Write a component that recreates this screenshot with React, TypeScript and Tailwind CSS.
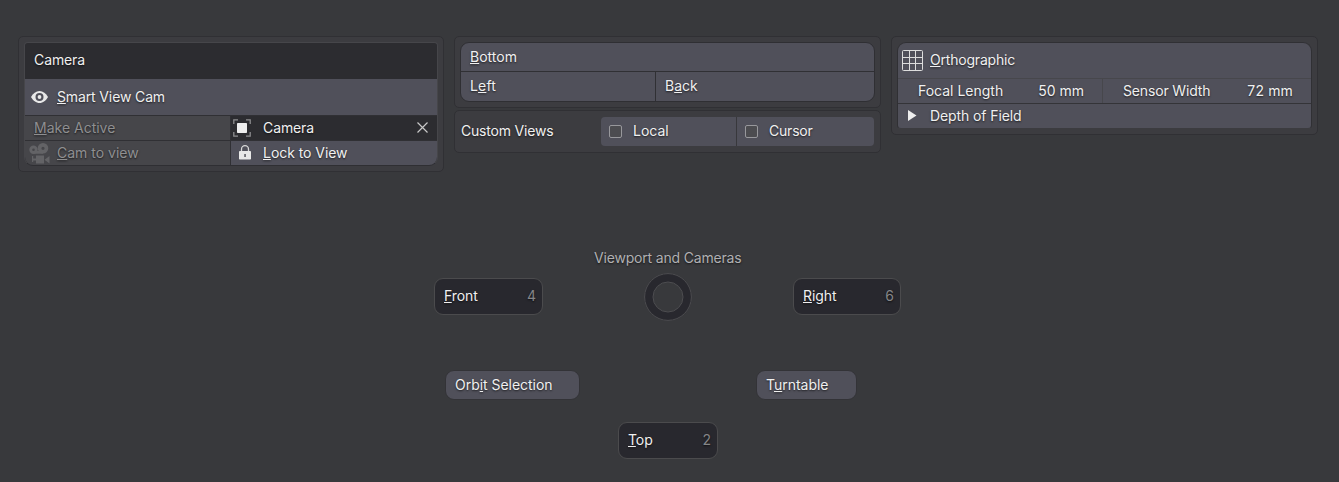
import React from "react";

type LabelProps = { text: string; hot?: number; className?: string };

function Label({ text, hot = -1, className = "" }: LabelProps) {
  return (
    <span className={`whitespace-pre [text-shadow:0_1px_2px_rgba(0,0,0,0.65)] ${className}`}>
      {hot < 0 ? (
        text
      ) : (
        <>
          {text.slice(0, hot)}
          <span className="underline decoration-1 underline-offset-1 [text-decoration-skip-ink:none]">{text[hot]}</span>
          {text.slice(hot + 1)}
        </>
      )}
    </span>
  );
}

function Panel({ className = "", children }: { className?: string; children: React.ReactNode }) {
  return <section className={`rounded-[5px] border border-[#303034] bg-[#3c3c40] ${className}`}>{children}</section>;
}

function EyeIcon() {
  return (
    <svg className="h-[12px] w-[17px]" viewBox="0 0 17 12" fill="none">
      <path d="M0 6C2 2.500 5 0 8.500 0S15 2.500 17 6c-2 3.500-5 6-8.500 6S2 9.500 0 6Z" fill="#e8e8e8" />
      <circle cx="8.500" cy="6" r="4" fill="#50505a" />
      <circle cx="8.500" cy="6" r="1.900" fill="#e8e8e8" />
    </svg>
  );
}

function MovieCameraIcon() {
  return (
    <svg className="h-[21px] w-[21px]" viewBox="0 0 21 21" fill="#636366">
      <path fillRule="evenodd" d="M4.500 2.500a4.200 4.200 0 1 0 0 8.400 4.200 4.200 0 0 0 0-8.400Zm0 2.900a1.300 1.300 0 1 1 0 2.600 1.300 1.300 0 0 1 0-2.600Z" />
      <path fillRule="evenodd" d="M14 0a5.300 5.300 0 1 0 0 10.600A5.300 5.300 0 0 0 14 0Zm0 3.700a1.600 1.600 0 1 1 0 3.200 1.600 1.600 0 0 1 0-3.200Z" />
      <path d="M4 8h10v2.700H4zM7 12.500h8v8H7zM3 13h1.200v2.500H7v2H4.200V19H3zM20.500 13v7.500l-5-3.700Z" />
    </svg>
  );
}

function ObjectIcon() {
  return (
    <svg className="h-[18px] w-[18px]" viewBox="0 0 18 18" fill="none">
      <path d="M.8 5V.8H5M13 .8h4.200V5M17.200 13v4.200H13M5 17.200H.8V13" stroke="#8d8d8f" strokeWidth="1.300" />
      <rect x="4" y="4" width="10" height="10" rx=".8" fill="#eeeeee" />
    </svg>
  );
}

function LockIcon() {
  return (
    <svg className="h-[15px] w-[12px]" viewBox="0 0 12 15" fill="none">
      <path d="M2.500 7V4.200a3.500 3.500 0 0 1 7 0V7" stroke="#d8d8d8" strokeWidth="1.300" />
      <rect x="0" y="6" width="12" height="8.500" rx=".8" fill="#e8e8e8" />
      <rect x="5.300" y="9" width="1.500" height="3" fill="#55555c" />
    </svg>
  );
}

function GridIcon() {
  return (
    <svg className="h-[21px] w-[21px]" viewBox="0 0 21 21" fill="none" stroke="#dddddd">
      <rect x=".5" y=".5" width="20" height="20" rx="1" />
      <path d="M7.500 0v21M13.500 0v21M0 7.500h21M0 13.500h21" />
    </svg>
  );
}

function CloseIcon() {
  return (
    <svg className="h-[11px] w-[11px]" viewBox="0 0 11 11" fill="none" stroke="#c8c8c8" strokeWidth="1.200">
      <path d="m.5.5 10 10M10.500.5l-10 10" />
    </svg>
  );
}

function CameraPanel() {
  return (
    <Panel className="h-[136px] w-[426px] p-[5px]">
      <div className="flex h-[124px] flex-col overflow-hidden rounded-t-[4px] rounded-b-[9px] border border-[#46464a] border-b-[#2f2f33]">
        <div className="flex h-9 items-center bg-[#2c2c30] pb-[2px] pl-[9px]">
          <Label text="Camera" className="tracking-[-0.1px]" />
        </div>
        <div className="flex h-9 items-center bg-[#50505a]">
          <span className="ml-[6px] flex w-[26px]"><EyeIcon /></span>
          <Label text="Smart View Cam" hot={0} className="tracking-[-0.13px]" />
        </div>
        <div className="grid grow grid-cols-[205px_206px] grid-rows-[24px_24px] gap-px bg-[#303034] pt-px">
          <div className="flex items-center bg-[#46464a] pl-[9px] text-[#8f8f91]">
            <Label text="Make Active" hot={0} />
          </div>
          <div className="flex items-center bg-[#2c2c30] pl-[2px]">
            <ObjectIcon />
            <Label text="Camera" className="ml-[12px] tracking-[-0.1px]" />
            <span className="mr-[9px] ml-auto pb-px"><CloseIcon /></span>
          </div>
          <div className="flex items-center bg-[#46464a] pl-[4px] text-[#8f8f91]">
            <MovieCameraIcon />
            <Label text="Cam to view" hot={0} className="ml-[7px]" />
          </div>
          <div className="flex items-center bg-[#50505a] pl-[8px]">
            <span className="pb-px"><LockIcon /></span>
            <Label text="Lock to View" hot={0} className="ml-[12px] tracking-[-0.05px]" />
          </div>
        </div>
      </div>
    </Panel>
  );
}

function Checkbox() {
  return <span className="h-[13px] w-[13px] rounded-[2px] border border-[#98989c] bg-[#4c4c50]" />;
}

function ViewsPanel() {
  return (
    <div className="flex w-[427px] flex-col gap-[2px]">
      <Panel className="h-[72px] p-[5px]">
        <div className="h-[60px] overflow-hidden rounded-[9px] border border-[#2f2f33] bg-[#50505a]">
          <div className="flex h-[29px] items-center border-b border-[#303034] pl-[9px]">
            <Label text="Bottom" hot={0} />
          </div>
          <div className="flex h-[29px]">
            <div className="flex w-[195px] items-center border-r border-[#303034] pb-[2px] pl-[9px]">
              <Label text="Left" hot={1} className="tracking-[0.15px]" />
            </div>
            <div className="flex grow items-center pb-[2px] pl-[9px]">
              <Label text="Back" hot={1} />
            </div>
          </div>
        </div>
      </Panel>
      <Panel className="flex h-[43px] items-center pr-[6px] pl-[6px]">
        <Label text="Custom Views" className="w-[140px] pb-[2px] tracking-[-0.2px]" />
        <div className="flex h-[29px] grow overflow-hidden rounded-[4px] bg-[#50505a]">
          <div className="flex w-[136px] items-center border-r border-[#38383c] pl-[8px]">
            <Checkbox />
            <Label text="Local" className="ml-[11px] pb-[2px]" />
          </div>
          <div className="flex grow items-center pl-[8px]">
            <Checkbox />
            <Label text="Cursor" className="ml-[11px] pb-[2px] tracking-[-0.2px]" />
          </div>
        </div>
      </Panel>
    </div>
  );
}

function LensPanel() {
  return (
    <Panel className="h-[99px] w-[427px] p-[5px]">
      <div className="h-[87px] overflow-hidden rounded-t-[9px] rounded-b-[4px] border border-[#303034] border-b-[#3c3c40] bg-[#50505a]">
        <div className="flex h-[35px] items-center pl-[4px]">
          <GridIcon />
          <Label text="Orthographic" hot={0} className="ml-[7px] pb-[2px] tracking-[-0.2px]" />
        </div>
        <div className="flex h-[26px] border-t border-b border-t-[#47474c] border-b-[#343438]">
          <div className="flex w-[205px] items-center justify-between border-r border-[#47474c] pr-[18px] pl-[20px]">
            <Label text="Focal Length" />
            <Label text="50 mm" />
          </div>
          <div className="flex grow items-center justify-between pr-[18px] pl-[20px]">
            <Label text="Sensor Width" className="tracking-[-0.15px]" />
            <Label text="72 mm" className="tracking-[0.15px]" />
          </div>
        </div>
        <div className="flex h-6 items-center pl-[10px]">
          <svg className="mb-px h-[11px] w-[9px]" viewBox="0 0 9 11" fill="#eeeeee"><path d="M0 0v11l8.500-5.500Z" /></svg>
          <Label text="Depth of Field" className="ml-[13px] tracking-[-0.1px]" />
        </div>
      </div>
    </Panel>
  );
}

function DarkButton({ text, shortcut, className }: { text: string; shortcut: string; className: string }) {
  return (
    <button className={`flex h-[37px] shrink-0 items-center justify-between rounded-[9px] border border-[#4b4b4d] bg-[#28282e] pr-[6px] pb-[2px] pl-[9px] ${className}`}>
      <Label text={text} hot={0} className="tracking-[-0.1px]" />
      <Label text={shortcut} className="text-[#858588]" />
    </button>
  );
}

function PlainButton({ text, hot, className }: { text: string; hot: number; className: string }) {
  return (
    <button className={`flex h-[30px] shrink-0 items-center rounded-[9px] border border-[#333337] bg-[#50505a] pl-[9px] ${className}`}>
      <Label text={text} hot={hot} className="tracking-[-0.03px]" />
    </button>
  );
}

export default function App() {
  return (
    <main className="flex h-[482px] w-[1339px] flex-col overflow-hidden bg-[#38393c] pt-[36px] font-['Inter',sans-serif] text-[14px] leading-[20px] text-[#f0f0f0]">
      <div className="flex h-[136px] items-start pl-[18px]">
        <CameraPanel />
        <div className="ml-[10px]"><ViewsPanel /></div>
        <div className="ml-[10px]"><LensPanel /></div>
      </div>
      <div className="mt-[76px] flex h-[20px] pl-[594px] text-[#b0b0b2]">
        <Label text="Viewport and Cameras" className="tracking-[-0.18px]" />
      </div>
      <div className="mt-[5px] flex h-[48px] items-start pl-[434px]">
        <DarkButton text="Front" shortcut="4" className="mt-[5px] w-[109px]" />
        <svg className="ml-[101px] h-[48px] w-[48px]" viewBox="0 0 48 48" fill="none">
          <circle cx="24" cy="24" r="19.300" stroke="#28282e" strokeWidth="9" />
          <circle cx="24" cy="24" r="23.400" stroke="#4d4d50" />
          <circle cx="24" cy="24" r="15" stroke="#4d4d50" />
        </svg>
        <DarkButton text="Right" shortcut="6" className="mt-[5px] ml-[101px] w-[108px]" />
      </div>
      <div className="mt-[49px] flex pl-[445px]">
        <PlainButton text="Orbit Selection" hot={3} className="w-[135px]" />
        <PlainButton text="Turntable" hot={1} className="ml-[176px] w-[101px]" />
      </div>
      <div className="mt-[22px] flex pl-[618px]">
        <DarkButton text="Top" shortcut="2" className="w-[100px]" />
      </div>
    </main>
  );
}
